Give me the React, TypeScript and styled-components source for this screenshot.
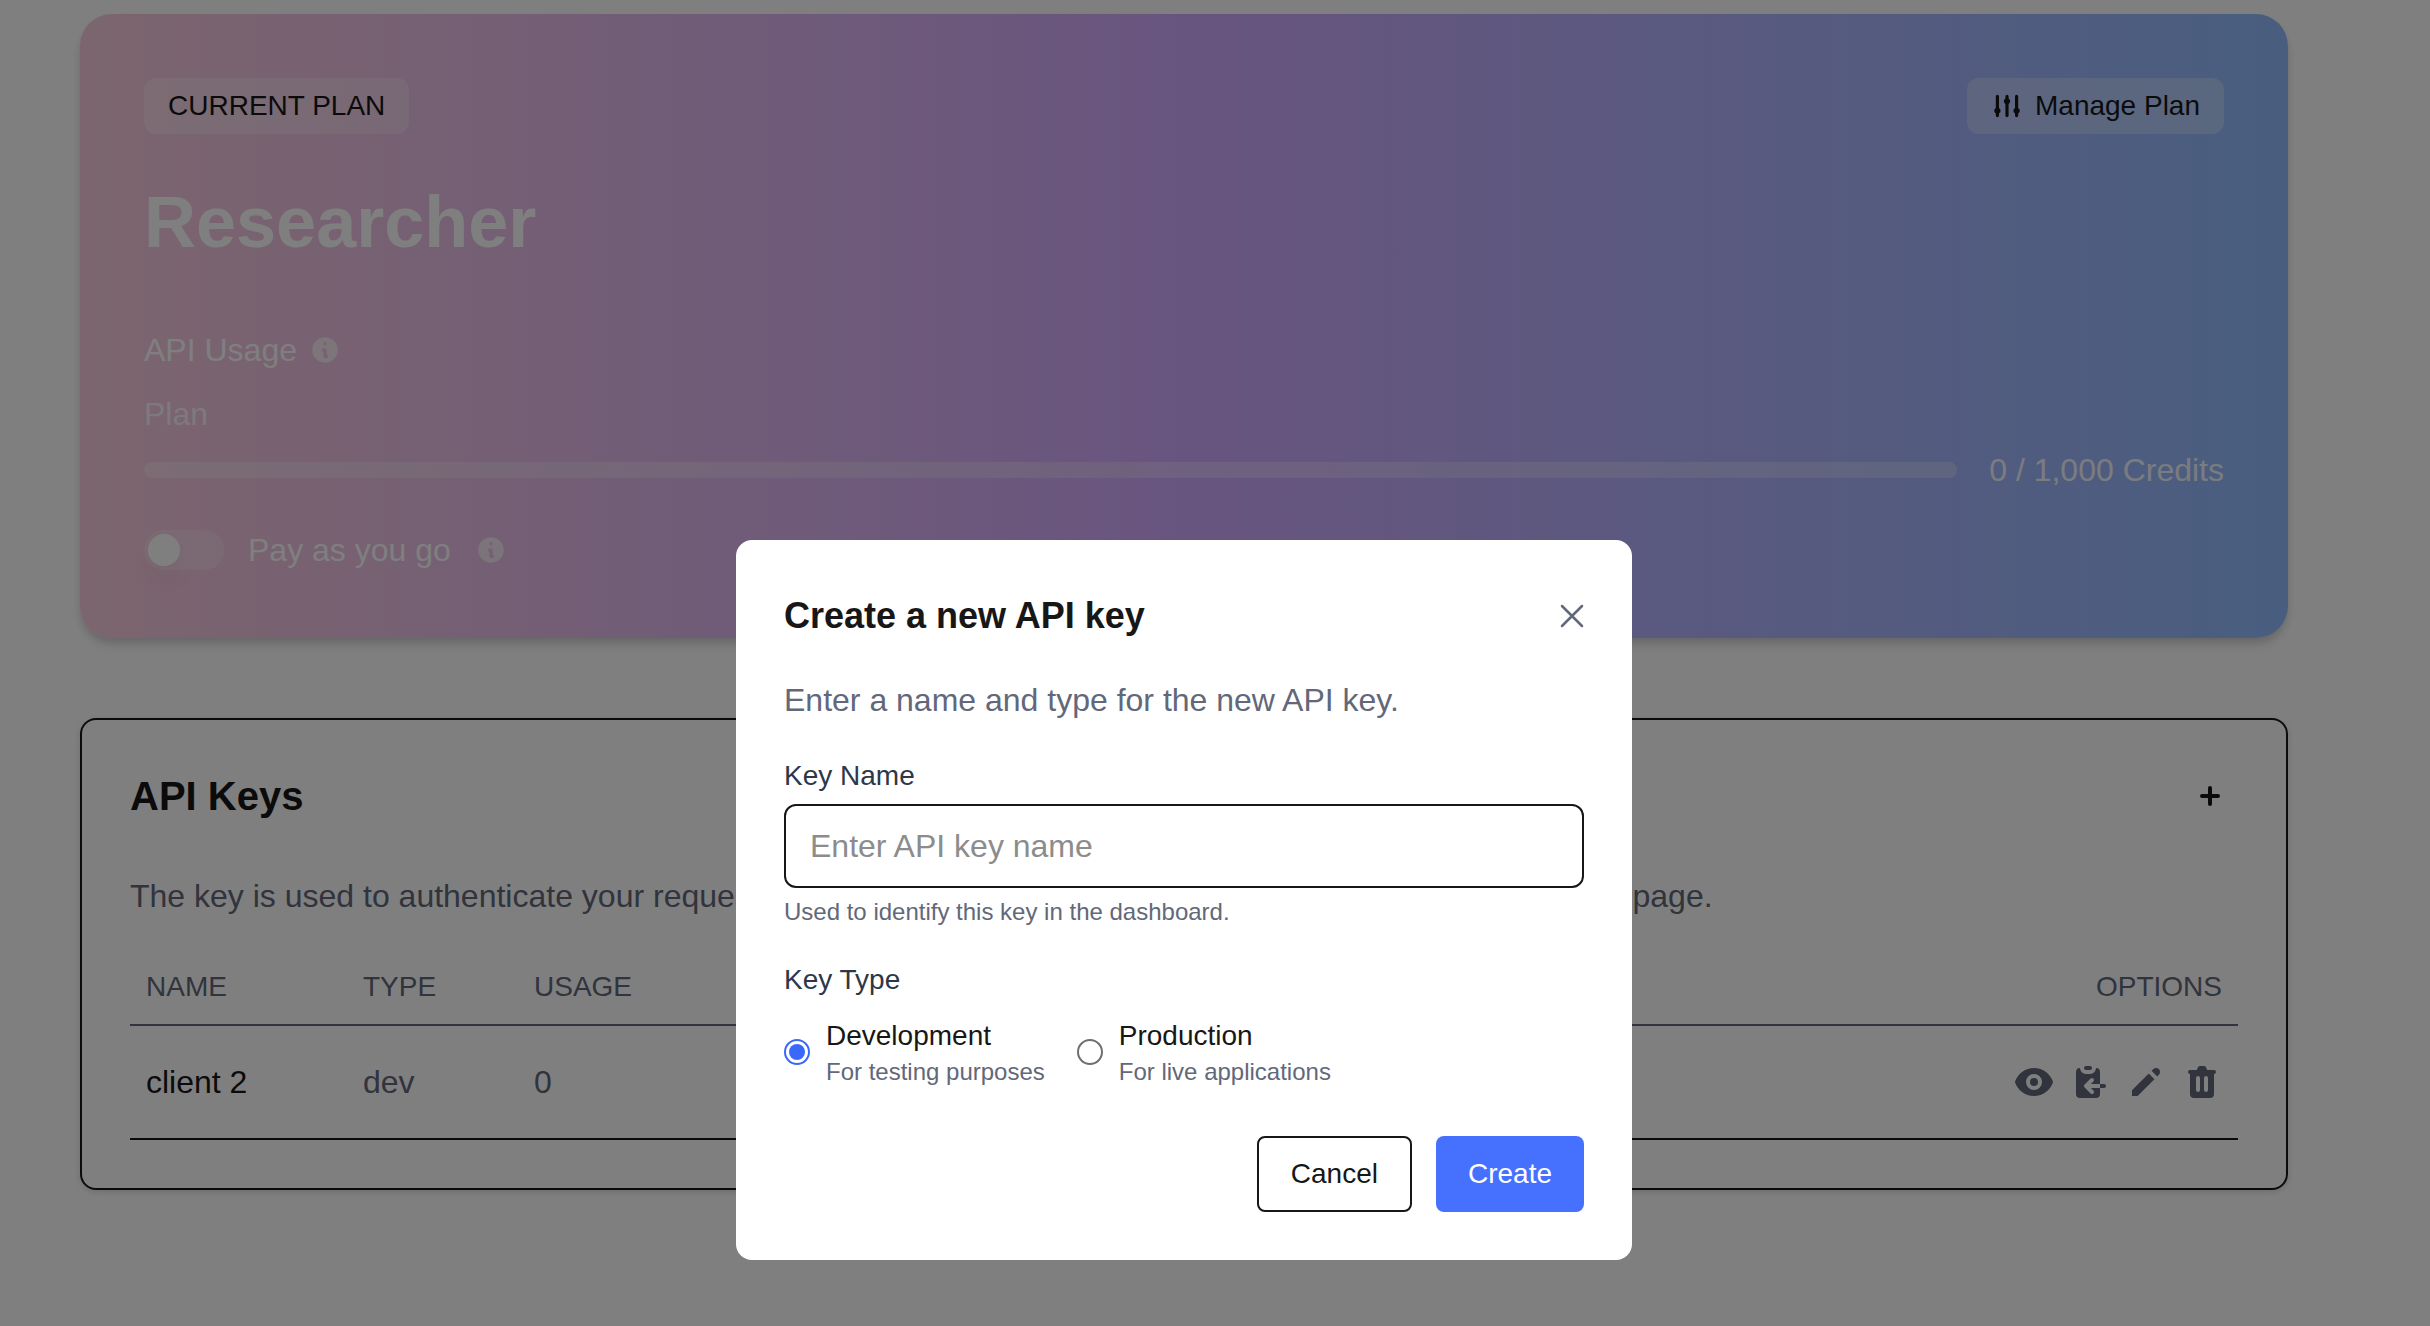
import React, { useState } from "react";
import styled, { createGlobalStyle } from "styled-components";
import {
  HiAdjustments,
  HiClipboardCopy,
  HiEye,
  HiInformationCircle,
  HiPencil,
  HiPlusSm,
  HiTrash,
} from "react-icons/hi";
import { HiOutlineXMark } from "react-icons/hi2";

const ink = "#171717";
const muted = "#626879";
const slate = "#2d3748";

const GlobalStyle = createGlobalStyle`
  *, *::before, *::after { box-sizing: border-box; }
  html, body { margin: 0; background: #ffffff; }
  body {
    font-family: "Liberation Sans", Arial, Helvetica, sans-serif;
    font-size: 32px;
    line-height: 48px;
    color: ${ink};
    overflow: hidden;
  }
  svg { display: block; flex-shrink: 0; }
  h1, h2, p { margin: 0; }
  button, input { font-family: inherit; }
`;

const Page = styled.main`
  width: 2368px;
  height: 1326px;
  padding: 14px 80px 0;
  display: flex;
  flex-direction: column;
  gap: 80px;
`;

const PlanCard = styled.section`
  height: 624px;
  padding: 64px;
  border-radius: 32px;
  color: #ffffff;
  background: linear-gradient(90deg, #f8cbdc 0%, #d1aaff 50%, #92bdff 100%);
  box-shadow: 0 8px 12px -2px rgba(0, 0, 0, 0.14), 0 4px 8px -2px rgba(0, 0, 0, 0.1);
`;

const PlanTop = styled.div`
  display: flex;
  justify-content: space-between;
`;

const Pill = styled.span`
  display: inline-flex;
  align-items: center;
  gap: 12px;
  height: 56px;
  padding: 0 24px;
  border: 0;
  border-radius: 12px;
  background: rgba(255, 255, 255, 0.28);
  color: ${ink};
  font-size: 28px;
  line-height: 40px;
`;

const PlanName = styled.h1`
  margin-top: 48px;
  font-size: 72px;
  line-height: 80px;
  font-weight: 700;
`;

const UsageTitle = styled.div`
  display: flex;
  align-items: center;
  gap: 12px;
  margin-top: 64px;
`;

const InfoIcon = styled(HiInformationCircle)`
  width: 32px;
  height: 32px;
  opacity: 0.65;
`;

const UsageLabel = styled.div`
  margin-top: 16px;
  opacity: 0.8;
`;

const UsageRow = styled.div`
  display: flex;
  align-items: center;
  gap: 32px;
  margin-top: 8px;
`;

const Track = styled.div`
  flex: 1;
  height: 16px;
  border-radius: 8px;
  background: rgba(255, 255, 255, 0.28);
`;

const Credits = styled.span`
  opacity: 0.9;
  white-space: nowrap;
`;

const PayRow = styled.div`
  display: flex;
  align-items: center;
  gap: 24px;
  height: 40px;
  margin-top: 36px;
`;

const Toggle = styled.div`
  width: 80px;
  height: 40px;
  padding: 4px;
  border-radius: 20px;
  background: rgba(255, 255, 255, 0.22);
`;

const Knob = styled.div`
  width: 32px;
  height: 32px;
  border-radius: 50%;
  background: #ffffff;
  box-shadow: 0 16px 24px rgba(0, 0, 0, 0.04);
`;

const KeysCard = styled.section`
  height: 472px;
  padding: 48px;
  border: 2px solid ${ink};
  border-radius: 16px;
  box-shadow: 0 2px 6px rgba(0, 0, 0, 0.14);
`;

const KeysHeader = styled.div`
  display: flex;
  align-items: center;
  justify-content: space-between;
  height: 56px;
  padding-right: 8px;
`;

const KeysTitle = styled.h2`
  font-size: 40px;
  line-height: 56px;
`;

const KeysText = styled.p`
  margin-top: 48px;
  color: ${muted};
  white-space: nowrap;
`;

const Table = styled.table`
  width: 100%;
  margin-top: 30px;
  table-layout: fixed;
  border-collapse: separate;
  border-spacing: 0;
`;

const HeadCell = styled.th<{ $width?: number; $end?: boolean }>`
  width: ${(p) => (p.$width ? `${p.$width}px` : "auto")};
  height: 76px;
  padding: 0 16px;
  border-bottom: 2px solid ${muted};
  color: ${muted};
  font-size: 28px;
  font-weight: 400;
  line-height: 40px;
  text-align: ${(p) => (p.$end ? "right" : "left")};
`;

const Cell = styled.td<{ $strong?: boolean }>`
  height: 114px;
  padding: 0 16px;
  border-bottom: 2px solid ${ink};
  color: ${(p) => (p.$strong ? ink : muted)};
`;

const Actions = styled.div`
  display: flex;
  justify-content: flex-end;
  gap: 16px;
`;

const Overlay = styled.div`
  position: fixed;
  inset: 0;
  background: rgba(0, 0, 0, 0.5);
`;

const DialogFrame = styled.div`
  width: 2368px;
  padding-top: 540px;
  display: flex;
  justify-content: center;
`;

const Dialog = styled.div`
  width: 896px;
  height: 720px;
  padding: 52px 48px 48px;
  border-radius: 16px;
  background: #ffffff;
`;

const DialogHeader = styled.div`
  display: flex;
  align-items: center;
  justify-content: space-between;
  height: 48px;
  margin-right: -8px;
`;

const DialogTitle = styled.h2`
  font-size: 36px;
  line-height: 48px;
`;

const CloseButton = styled.button`
  padding: 0;
  border: 0;
  background: none;
  color: ${muted};
`;

const DialogText = styled.p`
  margin-top: 36px;
  color: ${muted};
`;

const FieldLabel = styled.div`
  margin-top: 32px;
  color: ${slate};
  font-size: 28px;
  line-height: 40px;
`;

const NameInput = styled.input`
  display: block;
  width: 100%;
  height: 84px;
  margin-top: 8px;
  padding: 0 24px;
  border: 2px solid ${ink};
  border-radius: 12px;
  outline: none;
  background: #ffffff;
  color: ${ink};
  font-size: 32px;
  &::placeholder {
    color: #8c8c8c;
    opacity: 1;
  }
`;

const Hint = styled.p`
  color: ${muted};
  font-size: 24px;
  line-height: 32px;
`;

const FieldHint = styled(Hint)`
  margin-top: 8px;
`;

const Options = styled.div`
  display: flex;
  gap: 32px;
  margin-top: 16px;
`;

const Option = styled.label`
  display: flex;
  align-items: center;
  gap: 16px;
`;

const Radio = styled.input`
  appearance: none;
  width: 26px;
  height: 26px;
  margin: 0;
  display: grid;
  place-items: center;
  border: 2px solid #6f6f6f;
  border-radius: 50%;
  &:checked {
    border-color: #3a68fa;
  }
  &:checked::before {
    content: "";
    width: 16px;
    height: 16px;
    border-radius: 50%;
    background: #3a68fa;
  }
`;

const OptionName = styled.div`
  font-size: 28px;
  line-height: 40px;
`;

const Footer = styled.div`
  display: flex;
  justify-content: flex-end;
  gap: 24px;
  margin-top: 48px;
`;

const Button = styled.button<{ $primary?: boolean }>`
  height: 76px;
  padding: 0 32px;
  border: ${(p) => (p.$primary ? "0" : `2px solid ${ink}`)};
  border-radius: 8px;
  background: ${(p) => (p.$primary ? "#4671ff" : "#ffffff")};
  color: ${(p) => (p.$primary ? "#ffffff" : ink)};
  font-size: 28px;
  line-height: 40px;
`;

const keyTypes = [
  { id: "dev", name: "Development", hint: "For testing purposes" },
  { id: "prod", name: "Production", hint: "For live applications" },
];

export default function App() {
  const [name, setName] = useState("");
  const [type, setType] = useState("dev");

  return (
    <>
      <GlobalStyle />
      <Page>
        <PlanCard>
          <PlanTop>
            <Pill>CURRENT PLAN</Pill>
            <Pill as="button">
              <HiAdjustments size={32} />
              Manage Plan
            </Pill>
          </PlanTop>
          <PlanName>Researcher</PlanName>
          <UsageTitle>
            API Usage
            <InfoIcon />
          </UsageTitle>
          <UsageLabel>Plan</UsageLabel>
          <UsageRow>
            <Track />
            <Credits>0 / 1,000 Credits</Credits>
          </UsageRow>
          <PayRow>
            <Toggle>
              <Knob />
            </Toggle>
            <span>Pay as you go</span>
            <InfoIcon />
          </PayRow>
        </PlanCard>

        <KeysCard>
          <KeysHeader>
            <KeysTitle>API Keys</KeysTitle>
            <HiPlusSm size={40} />
          </KeysHeader>
          <KeysText>
            The key is used to authenticate your requests to the Research API. To learn more, see the
            documentation page.
          </KeysText>
          <Table>
            <thead>
              <tr>
                <HeadCell $width={217}>NAME</HeadCell>
                <HeadCell $width={171}>TYPE</HeadCell>
                <HeadCell>USAGE</HeadCell>
                <HeadCell $end>OPTIONS</HeadCell>
              </tr>
            </thead>
            <tbody>
              <tr>
                <Cell $strong>client 2</Cell>
                <Cell>dev</Cell>
                <Cell>0</Cell>
                <Cell>
                  <Actions>
                    <HiEye size={40} />
                    <HiClipboardCopy size={40} />
                    <HiPencil size={40} />
                    <HiTrash size={40} />
                  </Actions>
                </Cell>
              </tr>
            </tbody>
          </Table>
        </KeysCard>
      </Page>

      <Overlay>
        <DialogFrame>
          <Dialog role="dialog">
            <DialogHeader>
              <DialogTitle>Create a new API key</DialogTitle>
              <CloseButton aria-label="Close">
                <HiOutlineXMark size={40} />
              </CloseButton>
            </DialogHeader>
            <DialogText>Enter a name and type for the new API key.</DialogText>
            <FieldLabel>Key Name</FieldLabel>
            <NameInput
              placeholder="Enter API key name"
              value={name}
              onChange={(e) => setName(e.target.value)}
            />
            <FieldHint>Used to identify this key in the dashboard.</FieldHint>
            <FieldLabel>Key Type</FieldLabel>
            <Options>
              {keyTypes.map((t) => (
                <Option key={t.id}>
                  <Radio
                    type="radio"
                    name="key-type"
                    checked={type === t.id}
                    onChange={() => setType(t.id)}
                  />
                  <div>
                    <OptionName>{t.name}</OptionName>
                    <Hint>{t.hint}</Hint>
                  </div>
                </Option>
              ))}
            </Options>
            <Footer>
              <Button>Cancel</Button>
              <Button $primary>Create</Button>
            </Footer>
          </Dialog>
        </DialogFrame>
      </Overlay>
    </>
  );
}
